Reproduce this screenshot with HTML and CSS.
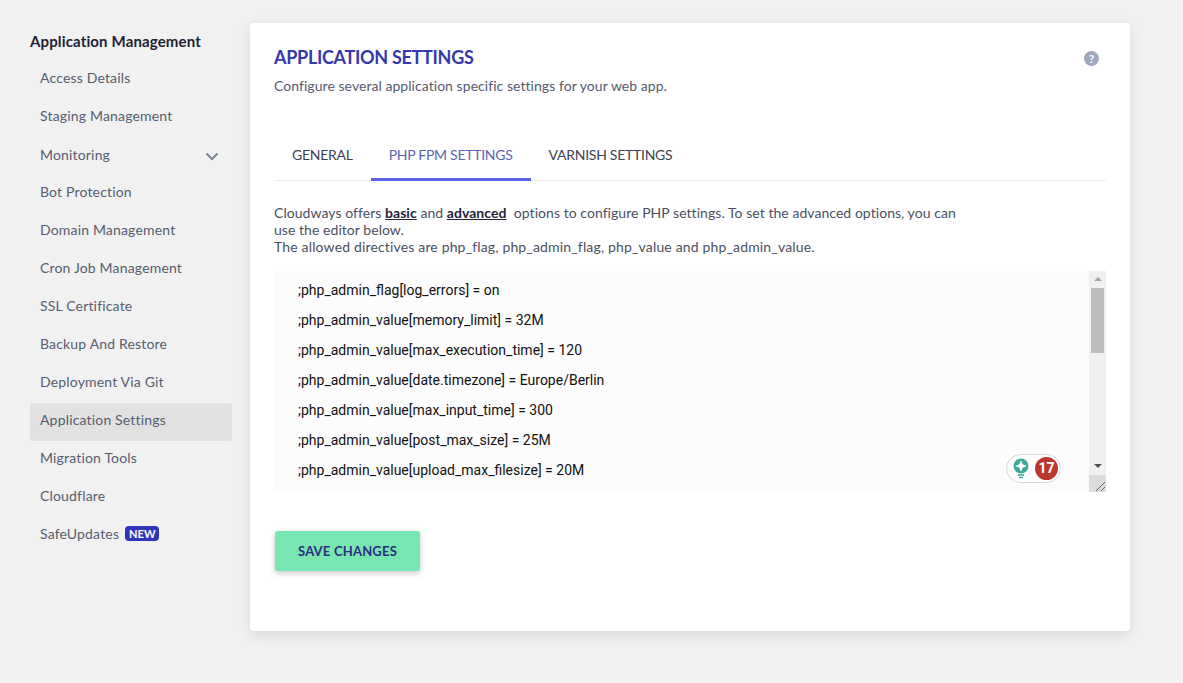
FILE: index.html
```html
<!DOCTYPE html>
<html lang="en">
<head>
<meta charset="utf-8">
<title>Application Settings</title>
<link rel="stylesheet" href="styles.css">
</head>
<body>
<div class="page">
  <nav class="sidebar">
    <h2 class="side-title">Application Management</h2>
    <a class="side-item">Access Details</a>
    <a class="side-item">Staging Management</a>
    <a class="side-item side-split"><span class="mon">Monitoring</span>
      <svg class="chev" width="14" height="9" viewBox="0 0 14 9"><path d="M1.5 1.5 7 7l5.5-5.5" fill="none" stroke="#7d8494" stroke-width="2"/></svg>
    </a>
    <a class="side-item">Bot Protection</a>
    <a class="side-item">Domain Management</a>
    <a class="side-item">Cron Job Management</a>
    <a class="side-item">SSL Certificate</a>
    <a class="side-item">Backup And Restore</a>
    <a class="side-item">Deployment Via Git</a>
    <a class="side-item active">Application Settings</a>
    <a class="side-item">Migration Tools</a>
    <a class="side-item">Cloudflare</a>
    <a class="side-item">SafeUpdates<span class="badge">NEW</span></a>
  </nav>
  <main class="card">
    <header class="card-head">
      <div>
        <h1 class="title">APPLICATION SETTINGS</h1>
        <p class="sub">Configure several application specific settings for your web app.</p>
      </div>
      <span class="help">?</span>
    </header>
    <div class="tabs">
      <a class="tab">GENERAL</a>
      <a class="tab tab-on">PHP FPM SETTINGS</a>
      <a class="tab">VARNISH SETTINGS</a>
    </div>
    <p class="intro">Cloudways offers <a class="lnk">basic</a> and <a class="lnk">advanced</a>&nbsp; options to configure PHP settings. To set the advanced options, you can use the editor below.<br><span class="allowed">The allowed directives are php_flag, php_admin_flag, php_value and php_admin_value.</span></p>
    <div class="editor">
      <div class="code">
        <div class="line">;php_admin_flag[log_errors] = on</div>
        <div class="line">;php_admin_value[memory_limit] = 32M</div>
        <div class="line">;php_admin_value[max_execution_time] = 120</div>
        <div class="line">;php_admin_value[date.timezone] = Europe/Berlin</div>
        <div class="line">;php_admin_value[max_input_time] = 300</div>
        <div class="line">;php_admin_value[post_max_size] = 25M</div>
        <div class="line">;php_admin_value[upload_max_filesize] = 20M</div>
      </div>
      <div class="grammar">
        <svg width="16" height="21" viewBox="0 0 16 21"><circle cx="8" cy="8" r="7.5" fill="#3fa796"/><path d="M8 4 9.2 6.8 12 8 9.2 9.2 8 12 6.800 9.200 4 8 6.800 6.800Z" fill="#fff" stroke="#fff" stroke-width="1.400"/><path d="M5 17h6M6 19.500h4" stroke="#3fa796" stroke-width="1.500"/></svg>
        <span class="count">17</span>
      </div>
      <div class="scrollbar">
        <span class="arrow-up"></span>
        <span class="thumb"></span>
        <span class="arrow-down"></span>
        <span class="resizer">
          <svg width="17" height="17" viewBox="0 0 17 17"><path d="M7 16 16 7M12 16l4-4" stroke="#666" stroke-width="1"/></svg>
        </span>
      </div>
    </div>
    <button class="save">SAVE CHANGES</button>
  </main>
</div>
</body>
</html>
```
FILE: styles.css
```css
* { box-sizing: border-box; }
html, body { margin: 0; height: 100%; }
body { background: #f1f1f1; font-family: "Lato", "Open Sans", sans-serif; color: #555b6e; overflow: hidden; }
.page { display: flex; align-items: flex-start; padding: 23px 0 0 30px; }
.sidebar { width: 202px; margin-right: 18px; display: flex; flex-direction: column; }
.side-title { margin: 8px 0 10px; font-size: 15px; line-height: 20px; font-weight: 700; color: #1e2238; letter-spacing: .14px; }
.side-item { height: 38px; padding: 0 10px 5px; display: flex; align-items: center; font-size: 14px; color: #565d70; border-radius: 3px; letter-spacing: .17px; }
.side-split { justify-content: space-between; padding: 0 13px 0 10px; }
.mon { margin-bottom: 3px; }
.active { background: #e1e1e1; }
.badge { margin-left: 6px; background: #3035bd; color: #fff; font-size: 11px; font-weight: 700; line-height: 15px; padding: 0 4px; border-radius: 4px; letter-spacing: 0; }
.card { width: 880px; height: 608px; background: #fff; border-radius: 4px; box-shadow: 0 4px 14px rgba(0,0,0,.1); padding: 23px 24px 24px; }
.card-head { display: flex; justify-content: space-between; align-items: flex-start; height: 86px; }
.title { margin: 0; font-size: 18px; line-height: 22px; font-weight: 700; color: #3538ad; letter-spacing: -.3px; }
.sub { margin: 9px 0 0; font-size: 14px; line-height: 18px; letter-spacing: .05px; }
.help { width: 15px; height: 15px; margin: 5px 7px 0 0; border-radius: 50%; background: #a0a6bd; color: #fff; font-size: 12px; font-weight: 700; line-height: 15px; text-align: center; }
.tabs { display: flex; height: 49px; border-bottom: 1px solid #eaeaea; }
.tab { padding: 0 18px; height: 49px; line-height: 46px; font-size: 14px; color: #3d4254; letter-spacing: -.27px; }
.tab-on { color: #5b62b4; border-bottom: 3px solid #5a63e6; }
.intro { margin: 23px 0 0; width: 700px; font-size: 14px; line-height: 17px; color: #4a5062; letter-spacing: .05px; }
.allowed { letter-spacing: .16px; }
.lnk { font-weight: 700; text-decoration: underline; color: #1f2337; }
.editor { position: relative; display: flex; justify-content: space-between; margin-top: 16px; height: 221px; background: #fcfcfc; overflow: hidden; }
.code { padding: 4px 0 0 24px; font-family: Roboto, sans-serif; font-size: 14px; color: #111; }
.line { height: 30px; line-height: 30px; }
.grammar { position: absolute; left: 732px; top: 183px; width: 55px; height: 29px; padding: 0 2px 0 6px; display: flex; align-items: center; justify-content: space-between; background: #fff; border: 1px solid #d5d6e0; border-radius: 15px; }
.count { width: 23px; height: 23px; border-radius: 50%; background: #bc362e; color: #fff; font: 700 14px/23px Roboto, sans-serif; text-align: center; }
.scrollbar { position: relative; width: 17px; background: #f0f0f0; display: flex; flex-direction: column; align-items: center; }
.arrow-up { margin-top: 6px; border: 4px solid transparent; border-top: 0; border-bottom: 4px solid #a3a3a3; }
.thumb { width: 13px; height: 65px; margin-top: 7px; background: #bdbdbd; }
.arrow-down { margin-top: 111px; border: 4px solid transparent; border-bottom: 0; border-top: 4px solid #505050; }
.resizer { position: absolute; left: 0; bottom: 0; width: 17px; height: 17px; background: #dcdcdc; }
.resizer svg { display: block; }
.save { display: block; margin: 39px 0 0 1px; width: 145px; height: 40px; background: #78e6b0; border: 0; border-radius: 3px; box-shadow: 0 2px 6px rgba(0,0,0,.22); color: #2a2e80; font: 700 13px "Lato", sans-serif; letter-spacing: .2px; }
```
